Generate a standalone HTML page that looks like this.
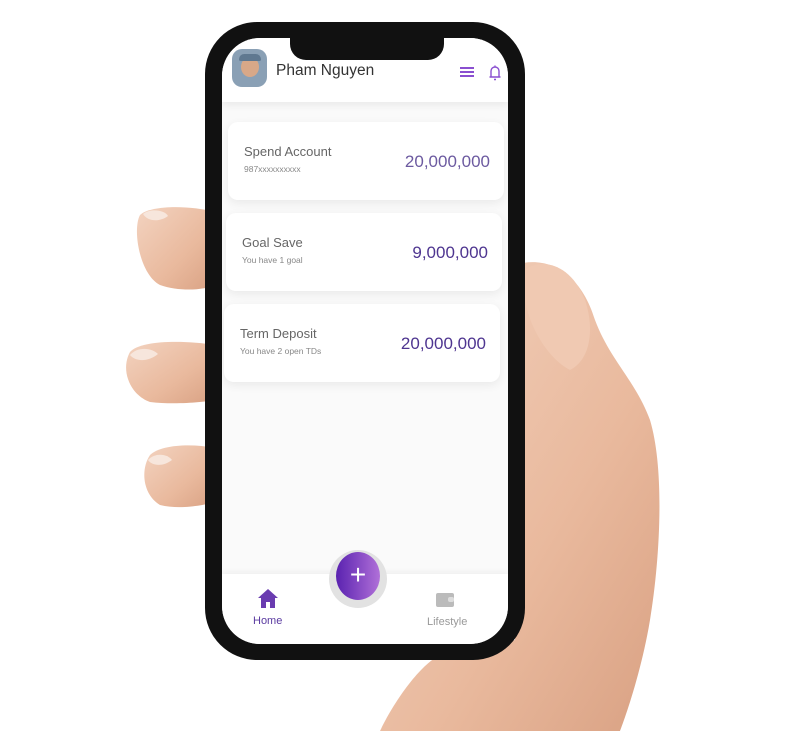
<!DOCTYPE html>
<html><head><style>
body{margin:0;width:800px;height:731px;background:#fff;position:relative;overflow:hidden;font-family:"Liberation Sans",sans-serif}
.abs{position:absolute}
.card{position:absolute;background:#fff;border-radius:10px;box-shadow:0 3px 10px rgba(0,0,0,.07)}
.t{position:absolute;color:#666;font-size:13px}
.s{position:absolute;color:#888;font-size:8.5px}
.v{position:absolute;color:#4e3590;font-size:17px;right:14px;top:30px}
</style></head><body>
<svg class="abs" style="left:0;top:0" width="800" height="731">
<defs><linearGradient id="sk" x1="0" y1="0" x2="1" y2="1"><stop offset="0" stop-color="#f3d3c0"/><stop offset=".6" stop-color="#e9b99d"/><stop offset="1" stop-color="#d9a183"/></linearGradient></defs>
<path d="M515 265 C545 255 580 270 595 320 C610 360 635 380 650 420 C665 470 660 560 650 620 C640 680 620 731 620 731 L380 731 C395 700 420 665 440 655 L515 640 Z" fill="url(#sk)"/>
<path d="M525 270 C540 258 570 262 585 300 C595 330 590 360 570 370 C550 360 530 330 525 300 Z" fill="#f0c9b2"/>
<path d="M215 212 C190 205 150 205 140 215 C132 230 140 275 160 285 C180 292 205 290 215 285 Z" fill="url(#sk)"/>
<path d="M215 345 C185 340 140 340 130 352 C120 370 130 395 150 402 C175 405 205 402 215 400 Z" fill="url(#sk)"/>
<path d="M215 448 C190 443 160 445 150 455 C140 470 143 495 160 505 C180 510 205 505 215 502 Z" fill="url(#sk)"/>
<path d="M143 214 C150 208 165 210 168 216 C160 222 148 222 143 214Z" fill="#f7e6dc"/>
<path d="M130 355 C138 346 152 348 158 354 C148 362 136 362 130 355Z" fill="#f7e6dc"/>
<path d="M148 460 C155 452 168 454 172 460 C163 467 152 466 148 460Z" fill="#f7e6dc"/>
</svg>
<div class="abs" style="left:205px;top:22px;width:320px;height:638px;border-radius:52px;background:#111;"></div>
<div class="abs" style="left:222px;top:38px;width:286px;height:606px;border-radius:38px;background:#fafafa;overflow:hidden">
  <div class="abs" style="left:0;top:0;width:286px;height:64px;background:#fff;box-shadow:0 3px 8px rgba(0,0,0,.07)"></div>
  <div class="abs" style="left:68px;top:-2px;width:154px;height:24px;background:#111;border-radius:0 0 16px 16px"></div>
  <div class="abs" style="left:10px;top:11px;width:35px;height:38px;border-radius:10px;background:#8aa0b5"><div class="abs" style="left:9px;top:8px;width:18px;height:20px;border-radius:50%;background:#d8a888"></div><div class="abs" style="left:7px;top:5px;width:22px;height:7px;border-radius:6px 6px 2px 2px;background:#5f7890"></div></div>
  <div class="abs" style="left:54px;top:24px;font-size:15.5px;color:#333">Pham Nguyen</div>
  <div class="abs" style="left:238px;top:29px;width:14px;height:2px;background:#8a4fd0;box-shadow:0 4px 0 #8a4fd0,0 8px 0 #8a4fd0"></div>
  <svg class="abs" style="left:266px;top:26px" width="14" height="17"><path d="M3 13 V7 a4 4 0 0 1 8 0 V13 M1.5 13 H12.5 M6 15.5 h2 M7 1.5 v1.5" fill="none" stroke="#8a4fd0" stroke-width="1.4"/></svg>
  <div class="card" style="left:6px;top:84px;width:276px;height:78px"><div class="t" style="left:16px;top:22px">Spend Account</div><div class="s" style="left:16px;top:42px">987xxxxxxxxxx</div><div class="v" style="color:#6c5aa0">20,000,000</div></div>
  <div class="card" style="left:4px;top:175px;width:276px;height:78px"><div class="t" style="left:16px;top:22px">Goal Save</div><div class="s" style="left:16px;top:42px">You have 1 goal</div><div class="v">9,000,000</div></div>
  <div class="card" style="left:2px;top:266px;width:276px;height:78px"><div class="t" style="left:16px;top:22px">Term Deposit</div><div class="s" style="left:16px;top:42px">You have 2 open TDs</div><div class="v">20,000,000</div></div>
  <div class="abs" style="left:0;top:536px;width:286px;height:80px;background:#fff;box-shadow:0 -2px 6px rgba(0,0,0,.05)"></div>
  <div class="abs" style="left:107px;top:512px;width:58px;height:58px;border-radius:50%;background:#e2e2e2"></div>
  <div class="abs" style="left:114px;top:514px;width:44px;height:48px;border-radius:50%;background:linear-gradient(90deg,#5a22b0,#b070d8);color:#fff;font-size:28px;text-align:center;line-height:46px">+</div>
  <svg class="abs" style="left:35px;top:549px" width="22" height="22"><path d="M1 11 L11 2 L21 11 H18 V21 H13 V15 H9 V21 H4 V11Z" fill="#6a3cb0"/></svg>
  <div class="abs" style="left:31px;top:577px;font-size:11px;color:#5a3aa0">Home</div>
  <div class="abs" style="left:214px;top:555px;width:18px;height:14px;border-radius:2px;background:#bbb"><div class="abs" style="right:0;top:4px;width:6px;height:5px;background:#ddd;border-radius:2px"></div></div>
  <div class="abs" style="left:205px;top:578px;font-size:11px;color:#999">Lifestyle</div>
</div>
</body></html>
